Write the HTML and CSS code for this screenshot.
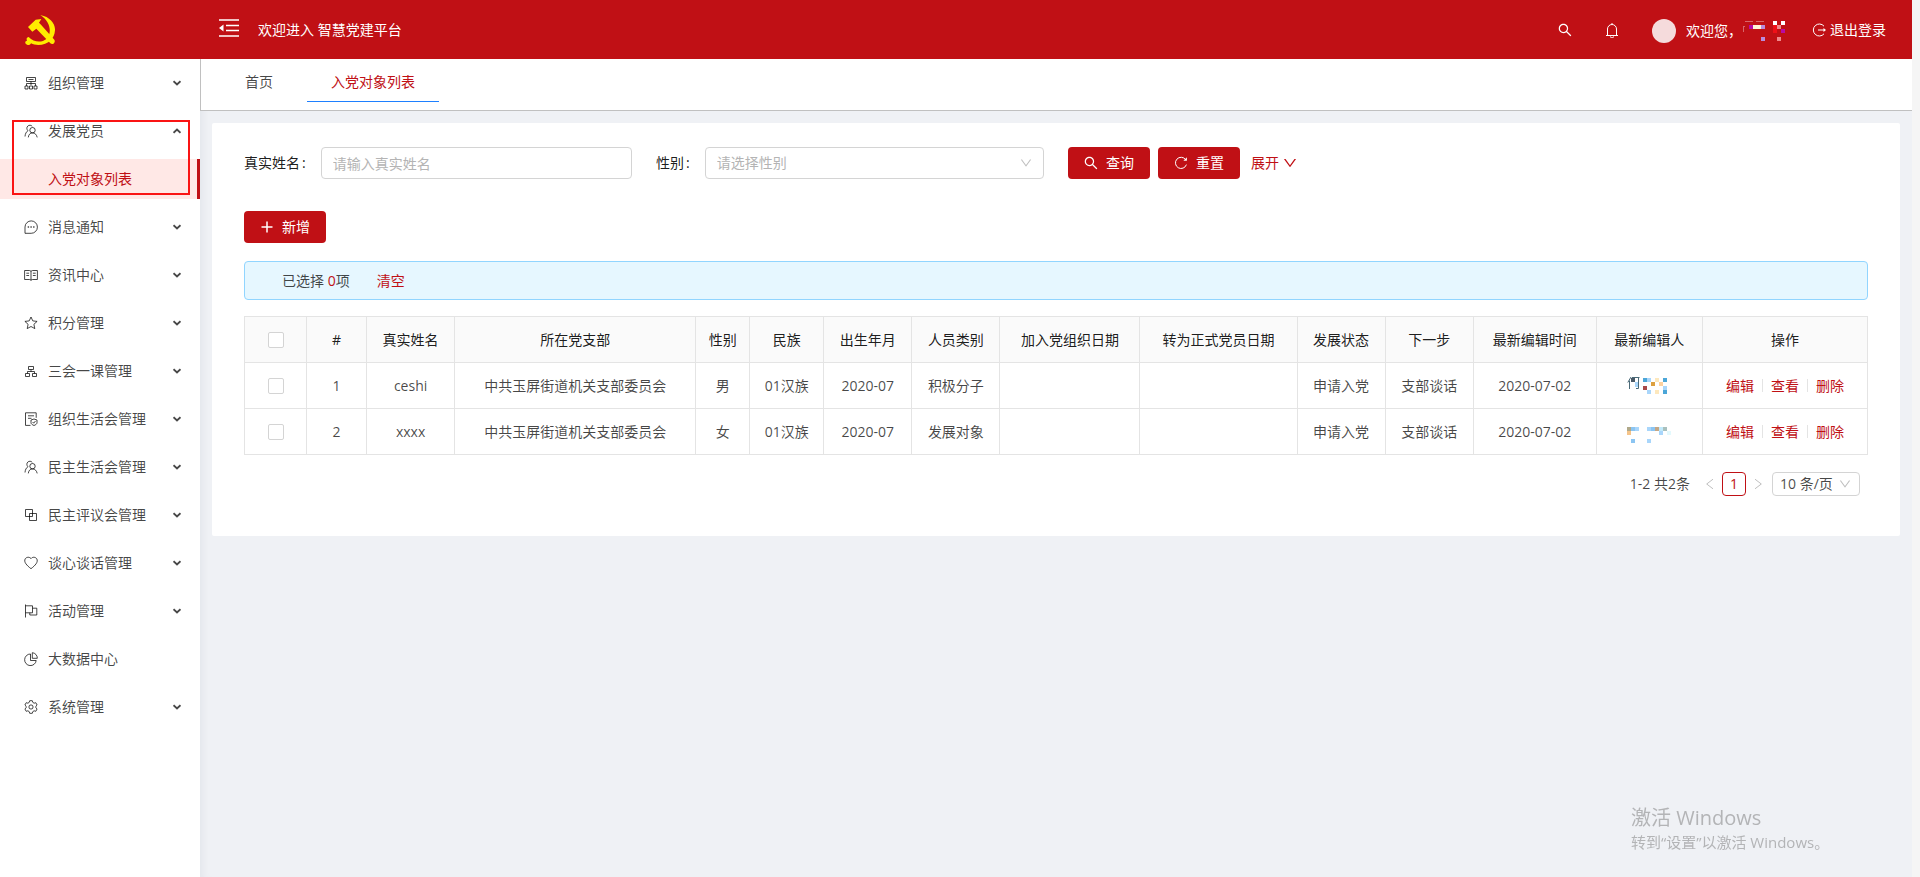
FILE: index.html
```
<!DOCTYPE html>
<html lang="zh-CN">

<head>
    <meta charset="UTF-8">
    <title>智慧党建平台</title>
    <link rel="stylesheet" href="styles.css">
</head>

<body>
    <svg class="sprite" aria-hidden="true">
        <symbol id="i-search" viewBox="64 64 896 896"><path fill="currentColor" stroke="none" d="M909.6 854.5L649.9 594.8C690.2 542.7 712 479 712 412c0-80.2-31.3-155.4-87.9-212.1-56.6-56.7-132-87.9-212.1-87.9s-155.5 31.3-212.1 87.9C143.2 256.5 112 331.8 112 412c0 80.1 31.3 155.5 87.9 212.1C256.5 680.8 331.8 712 412 712c67 0 130.6-21.8 182.7-62l259.7 259.6a8.2 8.2 0 0 0 11.6 0l43.6-43.5a8.2 8.2 0 0 0 0-11.6zM570.4 570.4C528 612.7 471.8 636 412 636s-116-23.3-158.4-65.6C211.3 528 188 471.8 188 412s23.3-116.1 65.6-158.4C296 211.3 352.2 188 412 188s116.1 23.2 158.4 65.6S636 352.2 636 412s-23.3 116.1-65.6 158.4z"/></symbol>
        <symbol id="i-down" viewBox="64 64 896 896"><path fill="currentColor" stroke="none" d="M884 256h-75c-5.1 0-9.9 2.5-12.9 6.6L512 654.2 227.9 262.6c-3-4.1-7.8-6.6-12.9-6.6h-75c-6.5 0-10.3 7.4-6.5 12.7l352.6 486.1c12.8 17.6 39 17.6 51.7 0l352.6-486.1c3.9-5.3.1-12.7-6.4-12.7z"/></symbol>
        <symbol id="i-reload" viewBox="0 0 14 14"><path d="M11.6 3.6A5.6 5.6 0 1 0 12.4 8.6"/><path fill="currentColor" stroke="none" d="M12.9 1.2v3.6H9.4z"/></symbol>
        <symbol id="i-plus" viewBox="0 0 14 14"><path stroke-width="1.5" d="M7 1.5v11M1.5 7h11"/></symbol>
        <symbol id="i-bell" viewBox="0 0 16 16"><path d="M2 13.5h12M3.5 13.5V7a4.5 4.5 0 0 1 9 0v6.500M8 2.500V1M6.500 14.500a1.500 1.500 0 0 0 3 0"/></symbol>
        <symbol id="i-logout" viewBox="0 0 14 14"><path d="M12 3.200A6 6 0 1 0 12 10.800M6 7h7"/><path fill="currentColor" stroke="none" d="M11.500 5l2.500 2-2.500 2z"/></symbol>
        <symbol id="i-chevron" viewBox="0 0 8 8"><path stroke-width="1.900" d="M.5 2.200L4 5.500l3.500-3.300"/></symbol>
        <symbol id="i-left" viewBox="0 0 12 12"><path d="M9 1.200L2.700 6 9 10.800"/></symbol>
        <symbol id="i-right" viewBox="0 0 12 12"><path d="M3 1.200L9.300 6 3 10.800"/></symbol>
        <symbol id="i-org" viewBox="0 0 14 14"><path d="M2.500 1.500h9v4h-9zM4.500 3.500h5M7 5.500V9M2.500 10V7.500h9V10M1 10h3v3H1zM5.500 10h3v3h-3zM10 10h3v3h-3z"/></symbol>
        <symbol id="i-team" viewBox="0 0 14 14"><path d="M8.300 2.500a3 3 0 1 0-4.300 4.100C2.200 7.800 1.200 9.800 1 12.500M8.500 3.500a2.700 2.700 0 1 1 0 5.400 2.700 2.700 0 0 1 0-5.400zM4.300 13.400c.3-2.600 1.700-4.500 4.200-4.500s4.200 1.900 4.700 4.500"/></symbol>
        <symbol id="i-message" viewBox="0 0 14 14"><path d="M1 13.300V7a6.200 6.200 0 1 1 6.200 6.300z"/><path stroke-width="1.400" d="M3.700 7h1.400M6.400 7h1.400M9.100 7h1.400"/></symbol>
        <symbol id="i-read" viewBox="0 0 14 14"><path d="M.6 2.500h4.800L7 3.200l1.600-.7h4.800v9H8.600l-1.600.7-1.600-.7H.6zM7 3.200v9M2.300 5.200h2.800M2.300 7.500h2.800M8.900 5.200h2.800M8.900 7.500h2.800"/></symbol>
        <symbol id="i-star" viewBox="0 0 14 14"><path d="M7 1l1.800 3.900 4.300.5L9.900 8.300l.9 4.300L7 10.500l-3.800 2.100.9-4.300L.9 5.400l4.300-.5z"/></symbol>
        <symbol id="i-cluster" viewBox="0 0 14 14"><path d="M4.500 2.500h5v3h-5zM1.500 9.500h4v3h-4zM8.500 9.500h4v3h-4zM7 5.500v2M3.500 9.500v-2h7v2"/></symbol>
        <symbol id="i-audit" viewBox="0 0 14 14"><path d="M6.500 13.400h-5V.8h10.700v5M4 3.800h6M4 6.300h3.500M10 7l3 1v2.700c0 1.200-1.200 2.100-3 2.800-1.800-.7-3-1.600-3-2.800V8zM8.600 10l1.100 1.200L11.500 9"/></symbol>
        <symbol id="i-block" viewBox="0 0 14 14"><path d="M1.500 1.500h7v7h-7zM5.500 5.500h7v7h-7z"/></symbol>
        <symbol id="i-heart" viewBox="0 0 14 14"><path d="M7 2.600C5.400.6 2.600 1 1.300 2.700-.7 6 3 9.600 7 12.700 11 9.600 14.700 6 12.700 2.700 11.400 1 8.600.6 7 2.600z"/></symbol>
        <symbol id="i-flag" viewBox="0 0 14 14"><path d="M1.500.5v13M1.500 1.800h7v7h-7M8.500 4.200h4.300V11H5.800V8.800"/></symbol>
        <symbol id="i-pie" viewBox="0 0 14 14"><path d="M6.500 2A5.800 5.800 0 1 0 12.200 8.500H6.500zM8.300.7v5.600h5A5.400 5.400 0 0 0 8.300.7z"/></symbol>
        <symbol id="i-setting" viewBox="0 0 14 14"><circle cx="7" cy="7" r="2.100"/><path d="M5.700.7h2.600l.5 1.700 1.300.8 1.700-.5 1.300 2.300L11.900 6.200v1.600l1.200 1.200-1.300 2.300-1.700-.5-1.300.8-.5 1.700H5.700l-.5-1.700-1.300-.8-1.700.5L.9 9l1.200-1.200V6.200L.9 5l1.300-2.300 1.700.5 1.300-.8z"/></symbol>
        <symbol id="i-fold" viewBox="0 0 20 18"><path stroke-width="1.700" d="M0 1h20M7 6.500h13M7 11.500h13M0 17h20"/><path fill="currentColor" stroke="none" d="M0 9l4.500-3.500v7z"/></symbol>
    </svg>

    <header class="header">
        <div class="logo">
            <svg viewBox="0 0 90 90" fill="#ffeb00">
                <path d="M46 0C76 6 91 26 90 46C89 60 84 69 78 74C62 92 34 93 18 85C17 90 9 92 4 88C-2 84 1 77 6 77C3 70 6 67 11 66C26 82 50 84 64 72C80 58 80 22 46 0Z"/>
                <path d="M9 36L32 14L49 12L42 23L48 29L88 74C93 82 83 92 76 85L34 41L22 50Z"/>
            </svg>
        </div>
        <button class="trigger" aria-label="收起菜单"><svg class="fold"><use href="#i-fold"/></svg></button>
        <span>欢迎进入 智慧党建平台</span>
        <div class="header-right">
            <button class="tool" aria-label="搜索"><svg class="icon"><use href="#i-search"/></svg></button>
            <button class="tool" aria-label="通知"><svg class="icon large"><use href="#i-bell"/></svg></button>
            <div class="user">
                <span class="avatar"></span>
                <span>欢迎您，</span>
                <svg class="mosaic" viewBox="0 0 44 20" aria-hidden="true">
                    <path fill="#d8666a" d="M1 5h2v1h-1v5h-1zM3 0h8v1h-8zM14 0h8v1h-8z"/>
                    <path fill="#b90aa5" d="M7 4h4v4h-4zM39 8h4v4h-4z"/>
                    <path fill="#fff3d6" d="M11 4h8v4h-8z"/>
                    <path fill="#b98bdc" d="M19 4h4v4h-4zM19 16h4v4h-4z"/>
                    <path fill="#fff" d="M31 0h4v4h-4zM39 0h4v4h-4z"/>
                    <path fill="#f00f18" d="M31 4h4v8h-4z"/>
                    <path fill="#f0898c" d="M35 4h4v4h-4zM35 16h4v4h-4z"/>
                </svg>
            </div>
            <a href="#" class="logout"><svg class="icon"><use href="#i-logout"/></svg>退出登录</a>
        </div>
    </header>

    <div class="layout">
        <aside class="sidebar">
            <ul class="menu">
                <li><button><svg class="icon"><use href="#i-org"/></svg>组织管理<svg class="arrow"><use href="#i-chevron"/></svg></button></li>
                <li>
                    <button><svg class="icon"><use href="#i-team"/></svg>发展党员<svg class="arrow open"><use href="#i-chevron"/></svg></button>
                    <a href="#" class="sub-item">入党对象列表</a>
                </li>
                <li><button><svg class="icon"><use href="#i-message"/></svg>消息通知<svg class="arrow"><use href="#i-chevron"/></svg></button></li>
                <li><button><svg class="icon"><use href="#i-read"/></svg>资讯中心<svg class="arrow"><use href="#i-chevron"/></svg></button></li>
                <li><button><svg class="icon"><use href="#i-star"/></svg>积分管理<svg class="arrow"><use href="#i-chevron"/></svg></button></li>
                <li><button><svg class="icon"><use href="#i-cluster"/></svg>三会一课管理<svg class="arrow"><use href="#i-chevron"/></svg></button></li>
                <li><button><svg class="icon"><use href="#i-audit"/></svg>组织生活会管理<svg class="arrow"><use href="#i-chevron"/></svg></button></li>
                <li><button><svg class="icon"><use href="#i-team"/></svg>民主生活会管理<svg class="arrow"><use href="#i-chevron"/></svg></button></li>
                <li><button><svg class="icon"><use href="#i-block"/></svg>民主评议会管理<svg class="arrow"><use href="#i-chevron"/></svg></button></li>
                <li><button><svg class="icon"><use href="#i-heart"/></svg>谈心谈话管理<svg class="arrow"><use href="#i-chevron"/></svg></button></li>
                <li><button><svg class="icon"><use href="#i-flag"/></svg>活动管理<svg class="arrow"><use href="#i-chevron"/></svg></button></li>
                <li><button><svg class="icon"><use href="#i-pie"/></svg>大数据中心</button></li>
                <li><button><svg class="icon"><use href="#i-setting"/></svg>系统管理<svg class="arrow"><use href="#i-chevron"/></svg></button></li>
            </ul>
            <div class="highlight"></div>
        </aside>

        <div class="main">
            <nav class="tabs">
                <a href="#">首页</a>
                <a href="#" class="active">入党对象列表</a>
            </nav>

            <main class="card">
                <form class="search-form">
                    <div class="field">
                        <label for="name">真实姓名</label>
                        <input id="name" type="text" placeholder="请输入真实姓名">
                    </div>
                    <div class="field">
                        <label for="gender">性别</label>
                        <div class="select">
                            <select id="gender">
                                <option>请选择性别</option>
                                <option>男</option>
                                <option>女</option>
                            </select>
                            <svg class="icon small"><use href="#i-down"/></svg>
                        </div>
                    </div>
                    <div class="actions">
                        <button type="button" class="btn"><svg class="icon"><use href="#i-search"/></svg>查询</button>
                        <button type="button" class="btn"><svg class="icon"><use href="#i-reload"/></svg>重置</button>
                        <a href="#" class="expand">展开<svg class="icon"><use href="#i-down"/></svg></a>
                    </div>
                </form>

                <button class="btn"><svg class="icon"><use href="#i-plus"/></svg>新增</button>

                <div class="alert">
                    <span>已选择 <b>0</b>项</span>
                    <a href="#">清空</a>
                </div>

                <table>
                    <colgroup>
                        <col class="w-62"><col class="w-60"><col class="w-88"><col class="w-241"><col class="w-54">
                        <col class="w-74"><col class="w-88"><col class="w-88"><col class="w-140"><col class="w-157">
                        <col class="w-88"><col class="w-88"><col class="w-123"><col class="w-106"><col class="w-165">
                    </colgroup>
                    <thead>
                        <tr>
                            <th><input type="checkbox" aria-label="全选"></th>
                            <th>#</th>
                            <th>真实姓名</th>
                            <th>所在党支部</th>
                            <th>性别</th>
                            <th>民族</th>
                            <th>出生年月</th>
                            <th>人员类别</th>
                            <th>加入党组织日期</th>
                            <th>转为正式党员日期</th>
                            <th>发展状态</th>
                            <th>下一步</th>
                            <th>最新编辑时间</th>
                            <th>最新编辑人</th>
                            <th>操作</th>
                        </tr>
                    </thead>
                    <tbody>
                        <tr>
                            <td><input type="checkbox" aria-label="选择第1行"></td>
                            <td>1</td>
                            <td>ceshi</td>
                            <td>中共玉屏街道机关支部委员会</td>
                            <td>男</td>
                            <td>01汉族</td>
                            <td>2020-07</td>
                            <td>积极分子</td>
                            <td></td>
                            <td></td>
                            <td>申请入党</td>
                            <td>支部谈话</td>
                            <td>2020-07-02</td>
                            <td>
                                <svg class="mosaic" viewBox="0 0 44 20" aria-hidden="true">
                                    <path fill="none" stroke="#4a6a78" d="M4 0L.8 5.500M2.500 3.500V12M5 .5h7.500M11.500 1v10.500H9"/>
                                    <path fill="#4a5a68" d="M4 1h4v4h-4z"/>
                                    <path fill="#a9d6fb" d="M8 5h3v5h-3zM20 1h4v4h-4zM36 9h4v4h-4zM20 13h4v4h-4z"/>
                                    <path fill="#4ba6d8" d="M16 1h4v4h-4zM36 1h4v4h-4zM36 13h4v4h-4z"/>
                                    <path fill="#a84848" d="M16 9h4v4h-4z"/>
                                    <path fill="#dca040" d="M24 5h4v4h-4z"/>
                                    <path fill="#fde8bd" d="M28 1h4v4h-4zM28 13h4v4h-4z"/>
                                    <path fill="#fcd2a0" d="M32 5h4v4h-4z"/>
                                </svg>
                            </td>
                            <td><div class="ops"><a href="#">编辑</a><a href="#">查看</a><a href="#">删除</a></div></td>
                        </tr>
                        <tr>
                            <td><input type="checkbox" aria-label="选择第2行"></td>
                            <td>2</td>
                            <td>xxxx</td>
                            <td>中共玉屏街道机关支部委员会</td>
                            <td>女</td>
                            <td>01汉族</td>
                            <td>2020-07</td>
                            <td>发展对象</td>
                            <td></td>
                            <td></td>
                            <td>申请入党</td>
                            <td>支部谈话</td>
                            <td>2020-07-02</td>
                            <td>
                                <svg class="mosaic" viewBox="0 0 44 20" aria-hidden="true">
                                    <path fill="#b0a98a" d="M0 4h4v4h-4z"/>
                                    <path fill="#f5c48a" d="M0 8h4v4h-4z"/>
                                    <path fill="#8cc5f2" d="M4 4h4v4h-4zM24 4h4v4h-4zM4 16h4v4h-4z"/>
                                    <path fill="#a9d6fb" d="M8 4h4v4h-4zM20 4h4v4h-4zM32 8h4v4h-4zM20 16h4v4h-4z"/>
                                    <path fill="#c5a684" d="M28 4h4v4h-4z"/>
                                    <path fill="#c2eafb" d="M32 4h4v4h-4z"/>
                                    <path fill="#a9c0bd" d="M36 4h4v4h-4z"/>
                                    <path fill="#e3f9fd" d="M40 8h4v4h-4z"/>
                                </svg>
                            </td>
                            <td><div class="ops"><a href="#">编辑</a><a href="#">查看</a><a href="#">删除</a></div></td>
                        </tr>
                    </tbody>
                </table>

                <div class="pagination">
                    <span>1-2 共2条</span>
                    <div class="pager">
                        <button aria-label="上一页"><svg class="icon small"><use href="#i-left"/></svg></button>
                        <button class="current">1</button>
                        <button aria-label="下一页"><svg class="icon small"><use href="#i-right"/></svg></button>
                    </div>
                    <div class="select page-size">
                        <select aria-label="每页条数">
                            <option>10 条/页</option>
                            <option>20 条/页</option>
                        </select>
                        <svg class="icon small"><use href="#i-down"/></svg>
                    </div>
                </div>
            </main>
        </div>
    </div>

    <div class="watermark">
        <p class="watermark-title">激活 Windows</p>
        <p>转到“设置”以激活 Windows。</p>
    </div>
</body>

</html>
```

FILE: styles.css
```
* {
    box-sizing: border-box;
}

body {
    margin: 0;
    padding-right: 8px;
    min-height: 100vh;
    display: flex;
    flex-direction: column;
    background-color: #f5f5f5;
    color: rgba(0, 0, 0, 0.72);
    font-family: "Open Sans", "Noto Sans CJK SC", sans-serif;
    font-size: 14px;
    line-height: 22px;
}

a {
    color: #c01015;
    text-decoration: none;
}

button,
input,
select {
    font: inherit;
    color: inherit;
}

button {
    border: none;
    background: none;
    padding: 0;
    cursor: pointer;
}

ul,
p {
    margin: 0;
    padding: 0;
    list-style: none;
}

.sprite {
    display: none;
}

.icon {
    width: 14px;
    height: 14px;
    flex: none;
    fill: none;
    stroke: currentColor;
}

.small {
    width: 12px;
    height: 12px;
}

.large {
    width: 16px;
    height: 16px;
}

.mosaic {
    display: block;
    width: 44px;
    height: 20px;
}

/* header */
.header {
    display: flex;
    align-items: center;
    height: 59px;
    background-color: #c01015;
    color: #fff;
}

.logo {
    width: 200px;
    padding-left: 25px;
}

.logo svg {
    display: block;
    width: 30px;
    height: 30px;
}

.trigger {
    display: flex;
    padding: 0 19px;
}

.fold {
    width: 20px;
    height: 18px;
    margin-bottom: 4px;
    fill: none;
    stroke: currentColor;
}

.header-right {
    display: flex;
    align-items: center;
    margin-left: auto;
    padding-right: 26px;
}

.tool {
    display: flex;
    padding: 0 16px;
}

.user {
    display: flex;
    align-items: center;
    padding: 2px 26px 0 16px;
}

.avatar {
    width: 24px;
    height: 24px;
    margin-right: 10px;
    border-radius: 50%;
    background-color: #f5dbdc;
}

.logout {
    display: flex;
    align-items: center;
    gap: 4px;
    color: #fff;
}

.layout {
    flex: 1;
    display: flex;
}

/* sidebar */
.sidebar {
    position: relative;
    width: 200px;
    flex: none;
    padding-top: 4px;
    background-color: #fff;
}

.menu button {
    display: flex;
    align-items: center;
    gap: 10px;
    width: 100%;
    height: 40px;
    margin-bottom: 8px;
    padding: 0 19px 0 24px;
}

.arrow {
    width: 8px;
    height: 8px;
    margin-left: auto;
    fill: none;
    stroke: currentColor;
}

.arrow.open {
    transform: rotate(180deg);
}

.sub-item {
    display: block;
    margin-bottom: 8px;
    padding-left: 48px;
    line-height: 40px;
    background-color: #ffe8e6;
    border-right: 3px solid #c01015;
}

.highlight {
    position: absolute;
    top: 61px;
    left: 12px;
    width: 178px;
    height: 75px;
    border: 2px solid #fa1414;
    pointer-events: none;
}

/* content */
.main {
    flex: 1;
    min-width: 0;
    background-color: #eff1f5;
    box-shadow: inset 8px 0 8px -6px rgba(0, 40, 60, 0.06);
}

.tabs {
    display: flex;
    gap: 10px;
    height: 52px;
    padding-left: 20px;
    background-color: #fff;
    border-left: 1px solid #c0c0c0;
    border-bottom: 1px solid #c0c0c0;
}

.tabs a {
    height: 43px;
    padding: 0 24px;
    line-height: 46px;
    color: rgba(0, 0, 0, 0.72);
}

.tabs .active {
    color: #c01015;
    border-bottom: 1px solid #1e80ff;
}

.card {
    margin: 12px;
    padding: 24px 32px 40px;
    border-radius: 2px;
    background-color: #fff;
}

.search-form {
    display: grid;
    grid-template-columns: repeat(4, minmax(0, 1fr));
    gap: 24px;
    margin-bottom: 32px;
}

.field {
    display: flex;
    align-items: center;
    color: rgba(0, 0, 0, 0.9);
}

.field label {
    flex: none;
}

.field label::after {
    content: ":";
    margin: 0 15px 0 2px;
}

.field input,
.select {
    flex: 1;
    min-width: 0;
    height: 32px;
    border: 1px solid #d4d4d4;
    border-radius: 4px;
}

.field input {
    padding: 0 11px;
    background-color: #fff;
}

.field input::placeholder {
    color: #b4b4b4;
}

.select {
    position: relative;
}

.select select {
    width: 100%;
    height: 100%;
    padding: 0 11px;
    border: none;
    background: none;
    appearance: none;
    color: #b4b4b4;
}

.select .icon {
    position: absolute;
    top: 9px;
    right: 11px;
    color: #bfbfbf;
    pointer-events: none;
}

.actions {
    grid-column: span 2;
    display: flex;
    align-items: center;
    gap: 8px;
}

.btn {
    display: flex;
    align-items: center;
    gap: 8px;
    height: 32px;
    padding: 0 16px;
    border-radius: 4px;
    background-color: #c01015;
    color: #fff;
}

.expand {
    display: flex;
    align-items: center;
    gap: 4px;
    padding: 0 3px;
}

.alert {
    display: flex;
    gap: 27px;
    margin: 18px 0 16px;
    padding: 8px 37px 7px;
    border: 1px solid #91d5ff;
    border-radius: 4px;
    background-color: #e6f7ff;
}

.alert b {
    color: #c01015;
    font-weight: 500;
}

/* table */
table {
    width: 100%;
    table-layout: fixed;
    border-collapse: collapse;
    text-align: center;
}

th,
td {
    height: 46px;
    padding: 0;
    border: 1px solid #e4e4e4;
    white-space: nowrap;
}

th {
    background-color: #fafafa;
    color: rgba(0, 0, 0, 0.9);
    font-weight: 400;
}

td .mosaic {
    margin: 3px auto 0;
}

.w-54 { width: 54px; }
.w-60 { width: 60px; }
.w-62 { width: 62px; }
.w-74 { width: 74px; }
.w-88 { width: 88px; }
.w-106 { width: 106px; }
.w-123 { width: 123px; }
.w-140 { width: 140px; }
.w-157 { width: 157px; }
.w-165 { width: 165px; }
.w-241 { width: 241px; }

input[type="checkbox"] {
    display: block;
    width: 16px;
    height: 16px;
    margin: 0 auto;
    appearance: none;
    border: 1px solid #d4d4d4;
    border-radius: 2px;
    background-color: #fff;
}

.ops {
    display: flex;
    align-items: center;
    justify-content: center;
}

.ops a + a {
    display: flex;
    align-items: center;
}

.ops a + a::before {
    content: "";
    width: 1px;
    height: 13px;
    margin: 0 8px;
    background-color: #e4e4e4;
}

/* pagination */
.pagination {
    display: flex;
    align-items: center;
    justify-content: flex-end;
    margin-top: 17px;
    padding-right: 8px;
}

.pager {
    display: flex;
    gap: 6px;
    margin: 0 8px 0 14px;
    color: #bfbfbf;
}

.pager button {
    display: flex;
    align-items: center;
    justify-content: center;
    min-width: 12px;
    height: 24px;
}

.pager .current {
    width: 24px;
    border: 1px solid #c01015;
    border-radius: 4px;
    color: #c01015;
}

.page-size {
    flex: none;
    width: 88px;
    height: 24px;
}

.page-size select {
    padding: 0 7px;
    color: rgba(0, 0, 0, 0.72);
}

.page-size .icon {
    top: 5px;
    right: 8px;
}

.watermark {
    position: fixed;
    right: 90px;
    bottom: 24px;
    width: 199px;
    color: #b3b4b6;
    font-size: 15px;
    white-space: nowrap;
    pointer-events: none;
}

.watermark-title {
    font-size: 20px;
    line-height: 26px;
}
```
